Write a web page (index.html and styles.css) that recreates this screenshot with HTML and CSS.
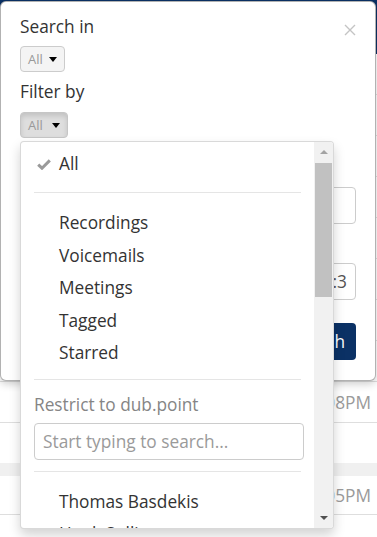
FILE: index.html
```html
<!DOCTYPE html>
<html lang="en">
<head>
  <meta charset="UTF-8">
  <meta name="viewport" content="width=device-width, initial-scale=1.0">
  <title>Search</title>
  <link rel="stylesheet" href="styles.css">
</head>
<body>

<div class="topbar"></div>

<div class="calls">
  <div class="call"><span class="time">1:42PM</span></div>
  <div class="call"><span class="time">1:30PM</span></div>
  <div class="call"><span class="time">1:12PM</span></div>
  <div class="call"><span class="time">1:02PM</span></div>
  <div class="call"><span class="time">12:51PM</span></div>
  <div class="call"><span class="time">12:40PM</span></div>
  <div class="call"><span class="time">12:33PM</span></div>
  <div class="call"><span class="time">12:21PM</span></div>
  <div class="call"><span class="time">12:08PM</span></div>
  <div class="call call-plain"></div>
  <div class="day"></div>
  <div class="call call-short"><span class="time">12:05PM</span></div>
  <div class="call"></div>
</div>

<div class="modal">
  <div class="modal-head">
    <span class="label">Search in</span>
    <button class="close">
      <svg width="12" height="12" viewBox="0 0 12 12"><path d="M1 1 L11 11 M11 1 L1 11" stroke="#c4c4c4" stroke-width="1.4" fill="none"/></svg>
    </button>
  </div>
  <div class="field">
    <button class="btn-xs">All <span class="caret"></span></button>
  </div>

  <div class="label label-filter">Filter by</div>
  <div class="field dropdown">
    <button class="btn-xs active">All <span class="caret"></span></button>

    <div class="dropdown-menu">
      <div class="menu-scroll">
        <div class="item">
          <span class="icon">
            <svg width="14" height="11" viewBox="0 0 14 11"><path d="M1.2 5.6 L5 9.2 L12.8 1.4" stroke="#9a9a9a" stroke-width="3" fill="none"/></svg>
          </span>All
        </div>
        <div class="divider divider-first"></div>
        <div class="item"><span class="icon"></span>Recordings</div>
        <div class="item"><span class="icon"></span>Voicemails</div>
        <div class="item"><span class="icon"></span>Meetings</div>
        <div class="item"><span class="icon"></span>Tagged</div>
        <div class="item"><span class="icon"></span>Starred</div>
        <div class="divider divider-types"></div>
        <div class="menu-header">Restrict to dub.point</div>
        <input class="menu-search" type="text" placeholder="Start typing to search...">
        <div class="divider divider-users"></div>
        <div class="item"><span class="icon"></span>Thomas Basdekis</div>
        <div class="item"><span class="icon"></span>Hank Sullivan</div>
        <div class="item"><span class="icon"></span>Maria Lopez</div>
      </div>
      <div class="scrollbar">
        <div class="sb-btn"><span class="arrow-up"></span></div>
        <div class="sb-thumb"></div>
        <div class="sb-fill"></div>
        <div class="sb-btn"><span class="arrow-down"></span></div>
      </div>
    </div>
  </div>

  <div class="box box-first"></div>
  <div class="box box-date"><span>01/01/2016 00:00 - 12/31/2016 23:3</span></div>
  <div class="actions">
    <button class="btn-primary">Search</button>
  </div>
</div>

</body>
</html>
```

FILE: styles.css
```css
body {
  font-family: 'Open Sans', 'Liberation Sans', sans-serif;
  font-size: 17.3px;
  color: #333;
  margin: 0;
  padding: 0;
  background: #fff;
  overflow: hidden;
}
.topbar {
  height: 54px;
  background-color: #0b3165;
}
.call {
  height: 40px;
  border-bottom: 1px solid #dedede;
  display: flex;
  align-items: center;
  justify-content: flex-end;
  padding-right: 6px;
}
.call-plain { border-bottom: none; }
.call-short { height: 38px; }
.day {
  height: 13px;
  background: #f0f0f0;
}
.time { color: #9a9a9a; }

.modal {
  position: absolute;
  top: 1px;
  left: 0;
  width: 376px;
  box-sizing: border-box;
  background: white;
  border: 1px solid rgba(0,0,0,0.3);
  border-radius: 6px;
  box-shadow: 0 3px 9px rgba(0,0,0,0.2);
  padding: 13px 19px 20px 19px;
}
.modal-head {
  display: flex;
  justify-content: space-between;
  align-items: flex-start;
}
.label {
  line-height: 24px;
}
.label-filter {
  margin-top: 8px;
}
.close {
  background: none;
  border: none;
  padding: 0;
  margin-top: 9px;
  width: 12px;
  height: 12px;
  display: flex;
  cursor: pointer;
}
.field {
  margin-top: 7px;
  height: 26px;
}
.dropdown {
  position: relative;
  margin-top: 8px;
}
.btn-xs {
  font-family: inherit;
  font-size: 13px;
  color: #999;
  height: 26px;
  padding: 0 7px;
  background: #f4f4f4;
  border: 1px solid #ccc;
  border-radius: 4px;
  display: flex;
  align-items: center;
  cursor: pointer;
}
.btn-xs.active {
  background: #dedede;
  border-color: #c6c6c6;
  box-shadow: inset 0 3px 5px rgba(0,0,0,0.125);
}
.caret {
  display: inline-block;
  width: 0;
  height: 0;
  margin-left: 6px;
  border-top: 5px solid #000;
  border-left: 4px solid transparent;
  border-right: 4px solid transparent;
}
.btn-xs.active .caret { margin-left: 9px; }

.box {
  height: 37px;
  box-sizing: border-box;
  border: 1px solid #ccc;
  border-radius: 4px;
  margin-top: 39px;
}
.box-first { margin-top: 49px; }
.box-date {
  display: flex;
  align-items: center;
  justify-content: flex-end;
  padding: 0 8px;
  overflow: hidden;
  white-space: nowrap;
  color: #555;
}
.actions {
  display: flex;
  justify-content: flex-end;
  margin-top: 23px;
}
.btn-primary {
  font-family: inherit;
  font-size: 17.3px;
  height: 37px;
  padding: 0 11px;
  background: #0b3165;
  color: white;
  border: none;
  border-radius: 4px;
  cursor: pointer;
}

/* open filter menu */
.dropdown-menu {
  position: absolute;
  top: calc(100% + 3px);
  left: 0;
  width: 314px;
  height: 388px;
  box-sizing: border-box;
  background: white;
  border: 1px solid rgba(0,0,0,0.15);
  border-radius: 4px;
  box-shadow: 0 6px 12px rgba(0,0,0,0.175);
  display: flex;
  overflow: hidden;
  z-index: 10;
}
.menu-scroll {
  flex: 1;
  min-width: 0;
  padding-top: 6px;
  overflow: hidden;
}
.item {
  height: 32.5px;
  line-height: 32px;
  padding-left: 16px;
  display: flex;
  align-items: center;
  white-space: nowrap;
  color: #333;
}
.icon {
  width: 22px;
  display: flex;
  align-items: center;
}
.divider {
  height: 1px;
  background: #e5e5e5;
  margin: 0 13px;
}
.divider-first {
  margin-top: 11px;
  margin-bottom: 14.5px;
}
.divider-types {
  margin-top: 9.5px;
  margin-bottom: 12.5px;
}
.divider-users {
  margin-top: 11px;
  margin-bottom: 14px;
}
.menu-header {
  padding-left: 13px;
  line-height: 24px;
  color: #858585;
}
.menu-search {
  display: block;
  margin: 6px 0 0 13px;
  width: 270px;
  height: 37px;
  box-sizing: border-box;
  border: 1px solid #ccc;
  border-radius: 4px;
  padding: 0 8px;
  font-family: inherit;
  font-size: 17.3px;
  color: #555;
}
.menu-search::placeholder { color: #9a9a9a; }

.scrollbar {
  width: 19px;
  background: #f1f1f1;
  display: flex;
  flex-direction: column;
}
.sb-btn {
  height: 20px;
  display: flex;
  align-items: center;
  justify-content: center;
}
.sb-thumb {
  height: 134px;
  margin: 1px 1px 0 1px;
  background: #c1c1c1;
}
.sb-fill { flex: 1; }
.arrow-up {
  width: 0;
  height: 0;
  border-bottom: 4px solid #a3a3a3;
  border-left: 4px solid transparent;
  border-right: 4px solid transparent;
}
.arrow-down {
  width: 0;
  height: 0;
  border-top: 4px solid #505050;
  border-left: 4px solid transparent;
  border-right: 4px solid transparent;
}
```
